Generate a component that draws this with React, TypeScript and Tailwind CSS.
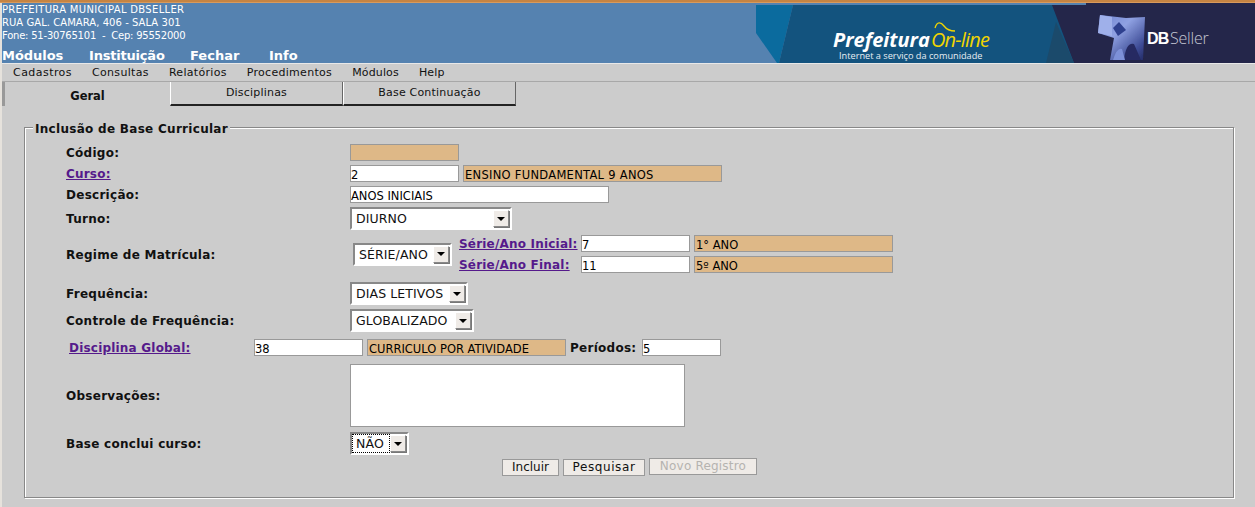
import React from "react";

const FONT = "font-['DejaVu_Sans',sans-serif]";

function Box({ w, tone = "white", children, className = "" }: { w: string; tone?: "white" | "tan"; children?: React.ReactNode; className?: string }) {
  const bg = tone === "white" ? "bg-white" : "bg-[#deb887] pl-px";
  return (
    <div className={`${w} ${bg} ${className} h-[17px] shrink-0 border border-[#999999] text-[11.5px] leading-[19px] text-black overflow-hidden whitespace-nowrap`}>
      {children}
    </div>
  );
}

function Select({ w, text, focus = false, className = "" }: { w: string; text: string; focus?: boolean; className?: string }) {
  return (
    <div className={`${w} ${className} h-[23px] shrink-0 flex items-stretch border-2 border-t-[#888888] border-l-[#888888] border-r-white border-b-white bg-white text-[12.5px] tracking-[0.1px] text-[#111]`}>
      <div className={`flex-1 flex items-center pl-1 pt-[2px] whitespace-nowrap overflow-hidden ${focus ? "outline-1 outline-dotted outline-black -outline-offset-1" : ""}`}>
        {text}
      </div>
      <div className="w-[16px] my-px mr-px flex items-center justify-center bg-[#efebe7] border border-t-white border-l-white border-r-[#888888] border-b-[#888888] shadow-[1px_1px_0_#777777]">
        <svg width="8" height="4" viewBox="0 0 8 4"><path d="M0 0h8L4 4z" fill="#000" /></svg>
      </div>
    </div>
  );
}

function Label({ children, className = "w-[284px]" }: { children: React.ReactNode; className?: string }) {
  return <div className={`${className} shrink-0 pt-[2px] text-[12px] leading-[15px] font-bold tracking-[0.27px] text-[#111]`}>{children}</div>;
}

function LinkLabel({ children, className = "" }: { children: React.ReactNode; className?: string }) {
  return <a className={`${className} shrink-0 pt-[2px] text-[12px] leading-[15px] font-bold tracking-[0.2px] underline text-[#551a8b] whitespace-nowrap`}>{children}</a>;
}

function Banner() {
  return (
    <svg width="499" height="60" viewBox="756 3 499 60" className="shrink-0 self-end">
      <defs>
        <linearGradient id="cube" x1="0" y1="0" x2="1" y2="1">
          <stop offset="0" stopColor="#6f84d0" />
          <stop offset="0.4" stopColor="#8fa1e2" />
          <stop offset="0.8" stopColor="#3c4a94" />
          <stop offset="1" stopColor="#232a62" />
        </linearGradient>
        <filter id="soft"><feGaussianBlur stdDeviation="0.6" /></filter>
      </defs>
      <path d="M756 5H793L779 63H777L756 33Z" fill="#0b6b9e" />
      <path d="M793 5H1086V3H1255V63H779Z" fill="#13537e" />
      <path d="M1052 5H1086V3H1255V63H1074Z" fill="#24264a" />
      <path d="M1046 63L1056 22L1074 63Z" fill="#1b4a6b" />
      <g filter="url(#soft)">
        <path d="M1100 15L1126 18L1145 17L1143 60L1110 60L1114 38L1098 33Z" fill="url(#cube)" />
        <path d="M1100 15L1112 17L1112 36L1098 33Z" fill="#9fb0ea" />
        <path d="M1113 28L1119 22L1126 30L1118 36Z" fill="#2f3f8e" />
        <path d="M1124 60Q1126 42 1134 44L1141 60Z" fill="#252a62" />
        <path d="M1113 60Q1117 47 1122 49L1125 60Z" fill="#7d90d8" />
      </g>
      <path d="M935 28C937 21 941 22 944 26C947 30 950 31 955 31" fill="none" stroke="#f2d500" strokeWidth="1.3" />
      <text x="833" y="47" fontFamily="'Open Sans',sans-serif" fontStyle="italic" fontWeight="700" fontSize="20" fill="#fff">Prefeitura</text>
      <text x="931" y="47" fontFamily="'Open Sans',sans-serif" fontStyle="italic" fontSize="20" fill="#f2d500" letterSpacing="-0.8">On-line</text>
      <text x="839" y="59" fontFamily="'Open Sans',sans-serif" fontSize="9.2" fill="#e8eef3">Internet a serviço da comunidade</text>
      <text x="1147" y="44" fontFamily="'Liberation Sans',sans-serif" fontWeight="700" fontSize="16" fill="#fff" letterSpacing="-0.8">DB</text>
      <text x="1170" y="44" fontFamily="'Open Sans',sans-serif" fontWeight="300" fontSize="16" fill="#c6c8d4" letterSpacing="-0.2">Seller</text>
    </svg>
  );
}

function Tab({ w, active, children }: { w: string; active?: boolean; children: React.ReactNode }) {
  return active ? (
    <div className={`${w} h-[24px] shrink-0 flex items-center justify-center border-l-[3px] border-l-[#999999] text-[11.5px] font-bold text-[#111] pt-[5px]`}>
      {children}
    </div>
  ) : (
    <div className={`${w} h-[24px] shrink-0 flex items-center justify-center border-l border-l-white border-r border-r-[#666] border-b-2 border-b-[#222] pt-[1px] text-[11px] tracking-[0.2px] text-[#111]`}>
      {children}
    </div>
  );
}

export default function App() {
  return (
    <div className={`${FONT} w-[1255px] h-[507px] overflow-hidden bg-[#e6e2dc] flex flex-col`}>
      <div className="h-[3px] shrink-0 bg-[#c58443] border-b border-b-[#d89a5c]" />
      <header className="h-[60px] shrink-0 ml-[2px] bg-[#5582b0] flex justify-between">
        <div className="text-white">
          <div className="text-[10px] leading-[13px]">
            <div className="tracking-[0.32px]">PREFEITURA MUNICIPAL DBSELLER</div>
            <div className="tracking-[0.05px]">RUA GAL. CAMARA, 406 - SALA 301</div>
            <div className="whitespace-pre tracking-[-0.22px]">Fone: 51-30765101  -  Cep: 95552000</div>
          </div>
          <nav className="mt-[7px] flex text-[13px] leading-[13px] font-bold">
            <span className="w-[87px] tracking-[-0.05px]">Módulos</span>
            <span className="w-[101px] tracking-[-0.2px]">Instituição</span>
            <span className="w-[79px]">Fechar</span>
            <span>Info</span>
          </nav>
        </div>
        <Banner />
      </header>
      <main className="flex-1 ml-[2px] bg-[#cccccc] border-t border-t-[#e8e8e8] flex flex-col">
        <div className="h-[18px] shrink-0 pl-[11px] pt-[2px] flex gap-[20px] items-center text-[11px] tracking-[0.33px] text-[#111] border-b border-b-[#a8a8a8]">
          <span className="tracking-[0.45px]">Cadastros</span>
          <span className="tracking-[0.33px]">Consultas</span>
          <span className="tracking-[0.3px]">Relatórios</span>
          <span className="tracking-[0.3px]">Procedimentos</span>
          <span className="tracking-[0.15px]">Módulos</span>
          <span className="tracking-[0.2px]">Help</span>
        </div>
        <div className="flex shrink-0">
          <Tab w="w-[168px]" active>Geral</Tab>
          <Tab w="w-[173px]">Disciplinas</Tab>
          <Tab w="w-[173px]">Base Continuação</Tab>
        </div>
        <div className="pl-[22px] pt-[14px]">
          <fieldset className="w-[1210px] h-[378px] border border-[#888888] pl-[41px] shadow-[1px_1px_0_#ffffff,inset_1px_1px_0_#ffffff]">
            <legend className="relative -ml-[33px] h-[15px] px-[2px] bg-[#cccccc] text-[12px] leading-[18px] font-bold tracking-[0.29px] text-[#111]">Inclusão de Base Curricular</legend>
            <div className="flex flex-col">
              <div className="flex items-center mt-[9px]">
                <Label>Código:</Label>
                <Box w="w-[109px]" tone="tan" />
              </div>
              <div className="flex items-center mt-[4px]">
                <LinkLabel className="w-[284px]">Curso:</LinkLabel>
                <Box w="w-[109px]">2</Box>
                <Box w="w-[259px]" tone="tan" className="ml-[4px] tracking-[0.28px]">ENSINO FUNDAMENTAL 9 ANOS</Box>
              </div>
              <div className="flex items-center mt-[4px]">
                <Label>Descrição:</Label>
                <Box w="w-[259px]">ANOS INICIAIS</Box>
              </div>
              <div className="flex items-center mt-[4px]">
                <Label>Turno:</Label>
                <Select w="w-[162px]" text="DIURNO" />
              </div>
              <div className="flex items-center mt-[5px]">
                <Label className="w-[287px]">Regime de Matrícula:</Label>
                <Select w="w-[99px]" text="SÉRIE/ANO" />
                <div className="ml-[7px] flex flex-col gap-[4px]">
                  <div className="flex items-center h-[17px]">
                    <LinkLabel className="w-[122px]">Série/Ano Inicial:</LinkLabel>
                    <Box w="w-[109px]">7</Box>
                    <Box w="w-[199px]" tone="tan" className="ml-[4px]">1° ANO</Box>
                  </div>
                  <div className="flex items-center h-[17px]">
                    <LinkLabel className="w-[122px]">Série/Ano Final:</LinkLabel>
                    <Box w="w-[109px]">11</Box>
                    <Box w="w-[199px]" tone="tan" className="ml-[4px]">5º ANO</Box>
                  </div>
                </div>
              </div>
              <div className="flex items-center mt-[9px]">
                <Label>Frequência:</Label>
                <Select w="w-[118px]" text="DIAS LETIVOS" />
              </div>
              <div className="flex items-center mt-[4px]">
                <Label>Controle de Frequência:</Label>
                <Select w="w-[124px]" text="GLOBALIZADO" />
              </div>
              <div className="flex items-center mt-[7px] pl-[3px]">
                <LinkLabel className="w-[185px]">Disciplina Global:</LinkLabel>
                <Box w="w-[109px]">38</Box>
                <Box w="w-[199px]" tone="tan" className="ml-[4px]">CURRICULO POR ATIVIDADE</Box>
                <Label className="w-[72px] ml-[4px]">Períodos:</Label>
                <Box w="w-[79px]">5</Box>
              </div>
              <div className="flex items-center mt-[8px]">
                <Label>Observações:</Label>
                <div className="w-[335px] h-[63px] bg-white border border-[#999999]" />
              </div>
              <div className="flex items-center mt-[5px]">
                <Label>Base conclui curso:</Label>
                <Select w="w-[59px]" text="NÃO" focus />
              </div>
              <div className="flex items-start gap-[4px] mt-[4px] pl-[436px]">
                <button className="w-[57px] h-[17px] shrink-0 bg-[#efebe7] border border-[#999999] text-[12px] leading-[15px] text-[#111]">Incluir</button>
                <button className="w-[82px] h-[17px] shrink-0 bg-[#efebe7] border border-[#999999] text-[12px] leading-[15px] tracking-[0.6px] text-[#111]">Pesquisar</button>
                <button disabled className="w-[108px] h-[17px] -mt-px shrink-0 bg-[#efebe7] border border-[#999999] text-[12px] leading-[15px] tracking-[0.2px] text-[#b5b3b0]">Novo Registro</button>
              </div>
            </div>
          </fieldset>
        </div>
      </main>
    </div>
  );
}
